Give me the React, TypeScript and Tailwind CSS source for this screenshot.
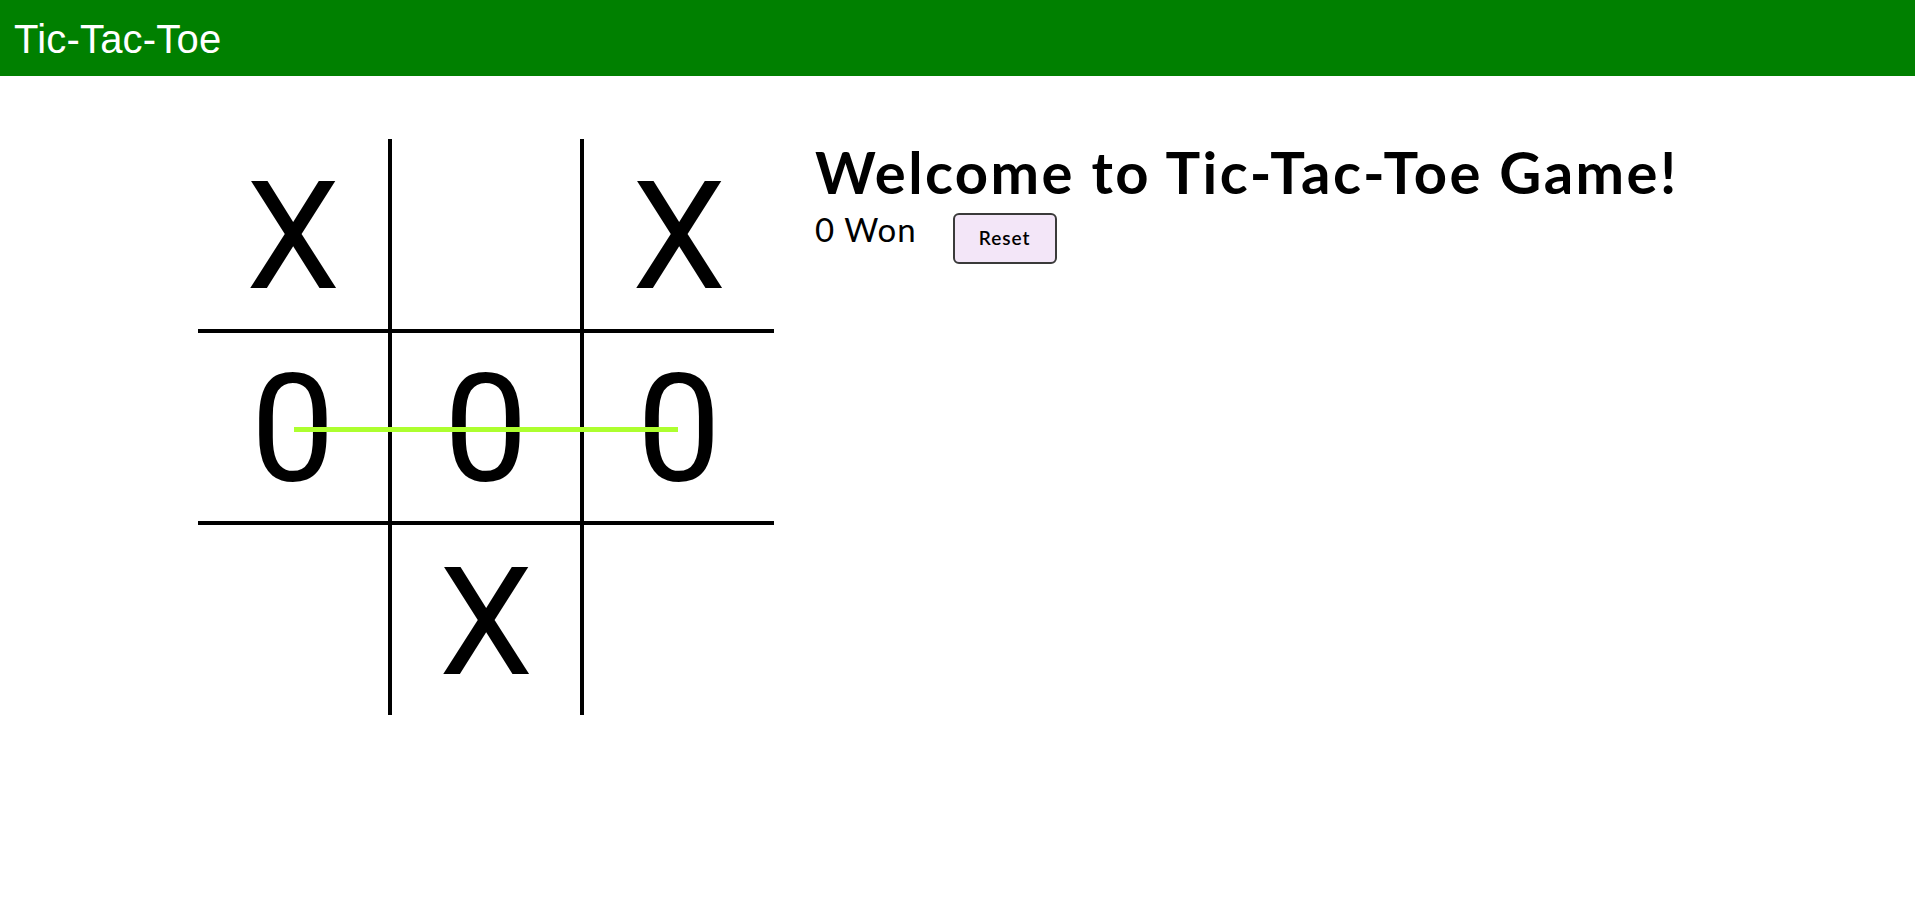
import React, { useState } from 'react';

type Mark = 'X' | '0' | '';

const INITIAL_BOARD: Mark[] = ['X', '', 'X', '0', '0', '0', '', 'X', ''];

// first two columns / rows carry the 4px divider on their far edge
const cellClasses = [
  'border-r-4 border-b-4',
  'border-r-4 border-b-4',
  'border-b-4',
  'border-r-4 border-b-4',
  'border-r-4 border-b-4',
  'border-b-4',
  'border-r-4',
  'border-r-4',
  '',
];

const App: React.FC = () => {
  const [board, setBoard] = useState<Mark[]>(INITIAL_BOARD);
  const [wins, setWins] = useState(0);

  const handleReset = () => {
    setBoard(Array(9).fill(''));
    setWins(0);
  };

  return (
    <div className="min-h-screen bg-white">
      {/* Header */}
      <header className="h-[76px] bg-[#008000] flex items-center px-[14px] pt-[2px]">
        <h1 className="text-white text-[40px] tracking-[0.2px] font-['Liberation_Sans',Arial,sans-serif]">Tic-Tac-Toe</h1>
      </header>

      <main className="flex items-start pl-[198px] gap-[41px]">
        {/* Board */}
        <div className="relative mt-[63px]">
          <div className="grid grid-cols-[194px_192px_190px] grid-rows-[194px_192px_190px] font-['Roboto',sans-serif]">
            {board.map((mark, i) => (
              <div
                key={i}
                className={`${cellClasses[i]} border-black flex items-center justify-center pt-[6px] text-[150px] leading-none text-black cursor-pointer`}
              >
                {mark}
              </div>
            ))}
          </div>
          {/* winning strike */}
          <div className="absolute left-[96px] top-[288px] w-[384px] h-[5px] bg-[#adff2f]" />
        </div>

        {/* Info */}
        <div className="mt-[61px] font-['Lato',sans-serif] text-black">
          <h2 className="text-[58px] font-bold leading-[1.2] tracking-[2.4px]">Welcome to Tic-Tac-Toe Game!</h2>
          <div className="flex items-start gap-[36px] mt-[1px]">
            <span className="pt-[2px] text-[33px] leading-[1.2] tracking-[1px]">{wins} Won</span>
            <button
              onClick={handleReset}
              className="mt-[5px] w-[104px] h-[51px] rounded-[6px] border-2 border-[#3a3a3a] bg-[#f3e6f8] text-[19px] font-semibold tracking-[1px]"
            >
              Reset
            </button>
          </div>
        </div>
      </main>
    </div>
  );
};

export default App;
